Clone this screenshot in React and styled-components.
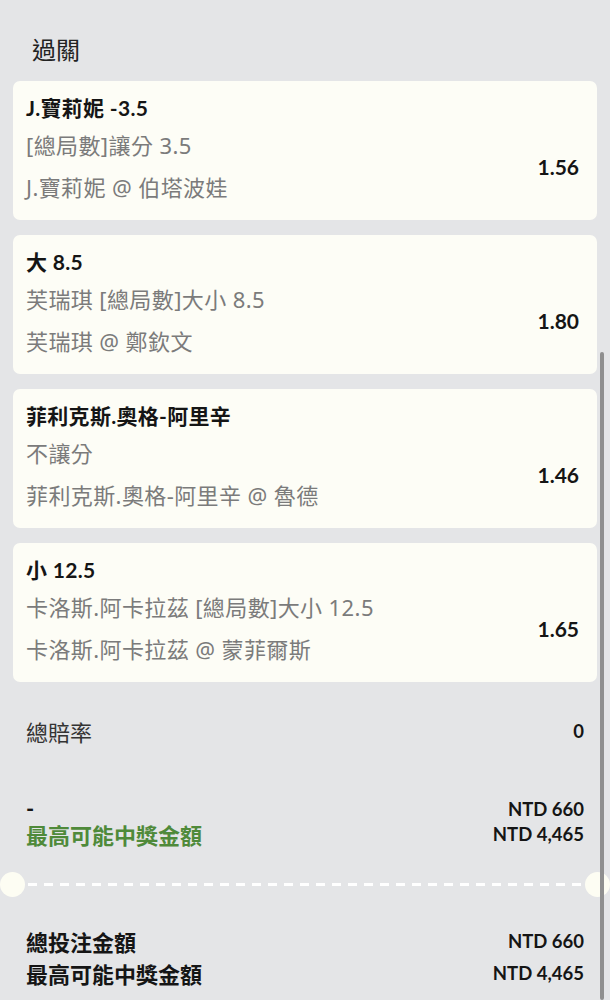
import styled, { createGlobalStyle } from 'styled-components';

const GlobalStyle = createGlobalStyle`
    html, body {
        margin: 0;
        padding: 0;
        background: #e4e5e7;
    }
    body {
        font-family: Lato, "Noto Sans CJK TC", sans-serif;
        overflow: hidden;
    }
`;

const Page = styled.div`
    min-height: 1000px;
    padding: 0 13px;
    box-sizing: border-box;
`;

const Heading = styled.h2`
    margin: 0;
    padding: 33px 0 16px 19px;
    font-family: "Noto Sans CJK TC", sans-serif;
    font-weight: 400;
    font-size: 24px;
    line-height: 32px;
    color: #222;
`;

const BetList = styled.div`
    display: flex;
    flex-direction: column;
    gap: 15px;
`;

const Card = styled.div`
    background: #fdfdf6;
    border-radius: 7px;
    padding: 12px 18px 15px 13px;
`;

const BetTitle = styled.div`
    font-family: Lato, "Noto Sans CJK TC", sans-serif;
    font-weight: 700;
    font-size: 21px;
    line-height: 30px;
    letter-spacing: 0.3px;
    color: #151515;
    margin-bottom: 4px;
`;

const BetBody = styled.div`
    display: flex;
    align-items: center;
    justify-content: space-between;
`;

const BetLines = styled.div`
    display: flex;
    flex-direction: column;
    gap: 6px;
`;

const BetLine = styled.div`
    font-family: "Noto Sans", "Noto Sans CJK TC", sans-serif;
    font-size: 22px;
    line-height: 36px;
    letter-spacing: 0.4px;
    color: #7b7b7b;
`;

const Odds = styled.div`
    font-family: Lato, sans-serif;
    font-weight: 700;
    font-size: 21px;
    color: #151515;
`;

const Summary = styled.div`
    padding: 0 13px;
`;

const Block = styled.div`
    margin-top: ${(p) => p.$top}px;
`;

const Row = styled.div`
    display: flex;
    justify-content: space-between;
    align-items: center;
    height: ${(p) => p.$h}px;
`;

const Label = styled.span`
    font-family: Lato, "Noto Sans CJK TC", sans-serif;
    font-size: 22px;
    font-weight: ${(p) => (p.$bold ? 700 : 400)};
    color: ${(p) => p.$color || '#333'};
`;

const Amount = styled.span`
    font-family: Lato, sans-serif;
    font-weight: 700;
    font-size: 18.5px;
    color: #151515;
`;

const Divider = styled.div`
    display: flex;
    align-items: center;
    margin: 26px -26px 0;
`;

const Notch = styled.div`
    width: 25px;
    height: 25px;
    border-radius: 50%;
    background: #fdfdf3;
    flex-shrink: 0;
`;

const Dashes = styled.div`
    flex: 1;
    height: 3px;
    margin: 0 3px;
    background: repeating-linear-gradient(to right, #ffffff 0 9px, transparent 9px 16px);
`;

const ScrollThumb = styled.div`
    position: fixed;
    right: 6px;
    top: 352px;
    bottom: 0;
    width: 4px;
    border-radius: 2px;
    background: #8f8f8f;
`;

const bets = [
    { title: 'J.寶莉妮 -3.5', market: '[總局數]讓分 3.5', match: 'J.寶莉妮 @ 伯塔波娃', odds: '1.56' },
    { title: '大 8.5', market: '芙瑞琪 [總局數]大小 8.5', match: '芙瑞琪 @ 鄭欽文', odds: '1.80' },
    { title: '菲利克斯.奧格-阿里辛', market: '不讓分', match: '菲利克斯.奧格-阿里辛 @ 魯德', odds: '1.46' },
    { title: '小 12.5', market: '卡洛斯.阿卡拉茲 [總局數]大小 12.5', match: '卡洛斯.阿卡拉茲 @ 蒙菲爾斯', odds: '1.65' },
];

export default function App() {
    return (
        <>
            <GlobalStyle />
            <Page>
                <Heading>過關</Heading>
                <BetList>
                    {bets.map((bet) => (
                        <Card key={bet.title}>
                            <BetTitle>{bet.title}</BetTitle>
                            <BetBody>
                                <BetLines>
                                    <BetLine>{bet.market}</BetLine>
                                    <BetLine>{bet.match}</BetLine>
                                </BetLines>
                                <Odds>{bet.odds}</Odds>
                            </BetBody>
                        </Card>
                    ))}
                </BetList>
                <Summary>
                    <Block $top={34}>
                        <Row $h={30}>
                            <Label>總賠率</Label>
                            <Amount>0</Amount>
                        </Row>
                    </Block>
                    <Block $top={50}>
                        <Row $h={25}>
                            <Label $bold $color="#151515">-</Label>
                            <Amount>NTD 660</Amount>
                        </Row>
                        <Row $h={25}>
                            <Label $bold $color="#4f8a3a">最高可能中獎金額</Label>
                            <Amount>NTD 4,465</Amount>
                        </Row>
                    </Block>
                    <Divider>
                        <Notch />
                        <Dashes />
                        <Notch />
                    </Divider>
                    <Block $top={28}>
                        <Row $h={32}>
                            <Label $bold $color="#151515">總投注金額</Label>
                            <Amount>NTD 660</Amount>
                        </Row>
                        <Row $h={32}>
                            <Label $bold $color="#151515">最高可能中獎金額</Label>
                            <Amount>NTD 4,465</Amount>
                        </Row>
                    </Block>
                </Summary>
            </Page>
            <ScrollThumb />
        </>
    );
}
